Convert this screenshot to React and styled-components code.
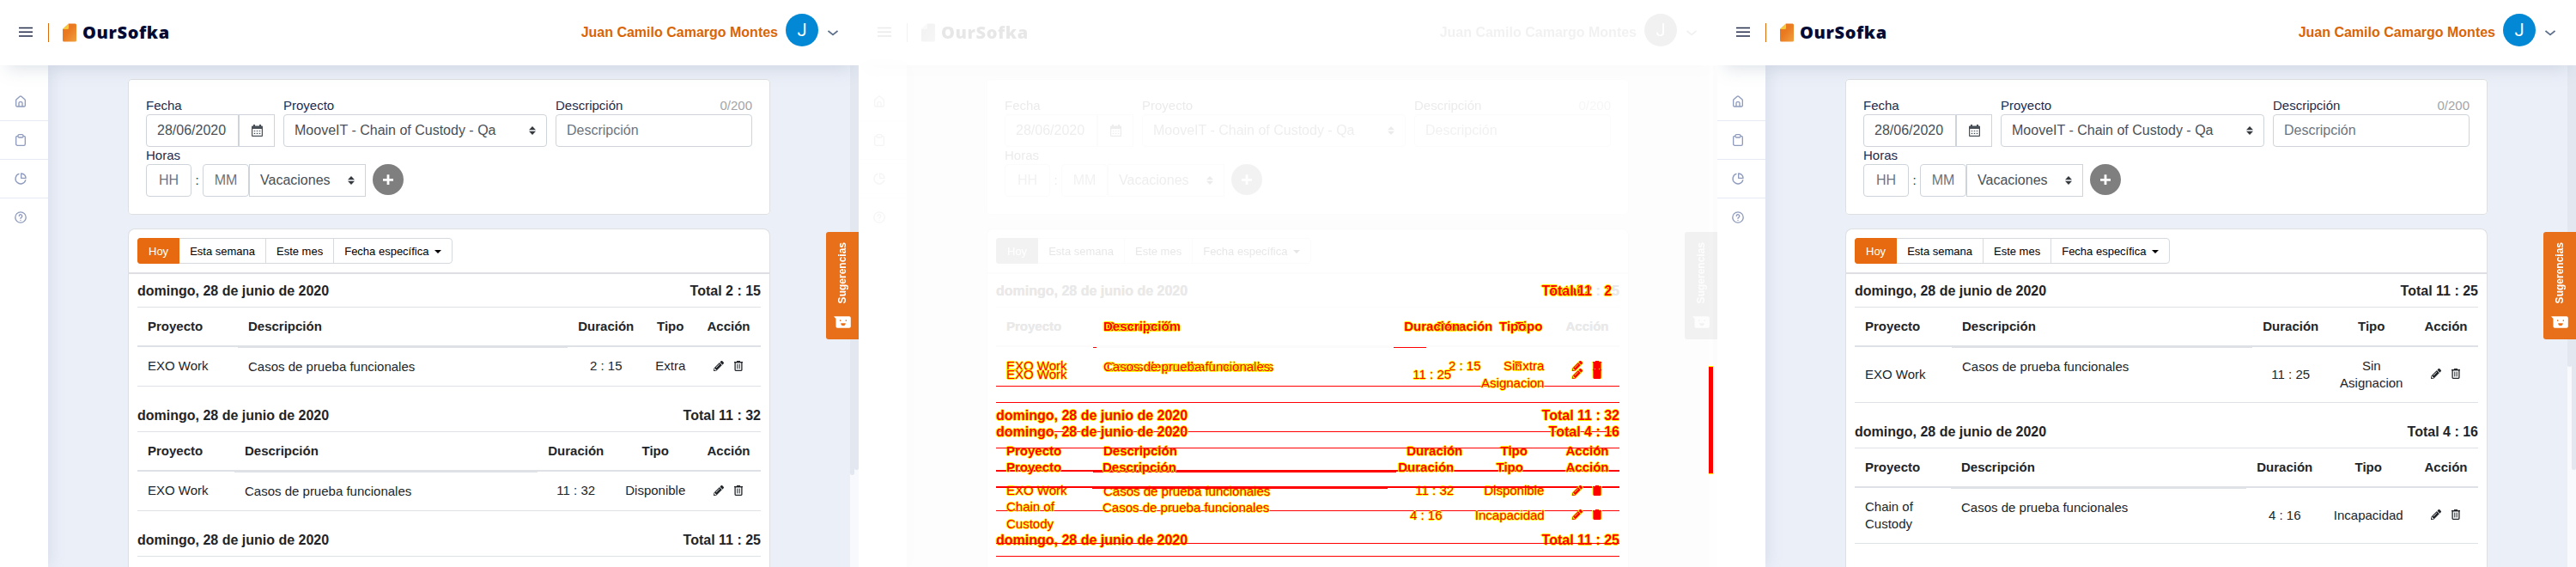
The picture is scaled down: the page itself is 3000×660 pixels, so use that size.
import React from "react";
import styled, { createGlobalStyle, css, ThemeProvider } from "styled-components";
import { FaPencilAlt } from "react-icons/fa";

const GlobalStyle = createGlobalStyle`
  *, *::before, *::after { box-sizing: border-box; }
  body { margin: 0; background: #fff; font-family: "Liberation Sans", Arial, Helvetica, sans-serif; }
  button, input { font-family: inherit; margin: 0; }
`;

const RED = "#ff0000";
const YELLOW = "#ffff00";

const normal = {
  fade: "none",
  page: "#ebeff8",
  cardLine: "#dddfe2",
  ink: "#212529",
  rule: "#dee2e6",
  rail: "#f7f9fd",
  thumb: "#e2e7f0",
};

const faded = {
  fade: "grayscale(1) opacity(0.1)",
  page: "#fdfdfd",
  cardLine: "#fbfbfb",
  ink: "#e9e9e9",
  rule: "#fbfbfb",
  rail: "#fefefe",
  thumb: "#fcfcfc",
};

const Board = styled.main`
  display: flex;
  width: 3000px;
  height: 660px;
  overflow: hidden;
`;

const Panel = styled.section`
  position: relative;
  display: flex;
  flex-direction: column;
  width: 1000px;
  height: 660px;
  overflow: hidden;
  background: #fff;
`;

const TopBar = styled.header`
  position: relative;
  z-index: 3;
  flex: none;
  display: flex;
  align-items: center;
  height: 76px;
  padding: 0 24px 0 22px;
  background: #fff;
  box-shadow: 0 12px 20px -8px rgba(125, 145, 165, 0.25);
  filter: ${(p) => p.theme.fade};
`;

const MenuIcon = styled.svg`
  display: block;
  width: 16px;
  height: 12px;
  margin-top: -2px;
`;

const Divider = styled.span`
  width: 1px;
  height: 22px;
  margin: 0 16px 0 18px;
  background: #d96b0b;
`;

const LogoMark = styled.svg`
  display: block;
  width: 16px;
  height: 22px;
  margin-top: -1px;
`;

const Brand = styled.span`
  flex: 1;
  padding: 0 0 0 7px;
  font: 800 20px/28px "Open Sans", "Noto Sans", sans-serif;
  letter-spacing: 0.6px;
  color: #030b35;
`;

const UserName = styled.span`
  margin-right: 9px;
  font-size: 16px;
  font-weight: 700;
  line-height: 20px;
  color: #d96506;
`;

const Avatar = styled.span`
  display: flex;
  align-items: center;
  justify-content: center;
  width: 38px;
  height: 38px;
  margin: -6px 11px 0 0;
  border-radius: 50%;
  background: #0288d4;
  color: #fff;
  font: 400 20px/38px Roboto, sans-serif;
`;

const Chevron = styled.svg`
  display: block;
  width: 12px;
  height: 7px;
  margin-top: 1px;
`;

const Body = styled.div`
  flex: 1;
  min-height: 0;
  display: flex;
`;

const SideNav = styled.nav`
  position: relative;
  z-index: 1;
  flex: none;
  width: 56px;
  padding-top: 20px;
  background: #fff;
  box-shadow: 2px 0 18px rgba(140, 160, 185, 0.22);
  filter: ${(p) => p.theme.fade};
`;

const NavItem = styled.a`
  display: flex;
  align-items: center;
  height: 45px;
  padding-left: 16px;
  border-bottom: 1px solid #e6eaf4;
  &:last-child { border-bottom-color: transparent; }
  svg { display: block; width: 16px; height: 16px; }
`;

const Content = styled.div`
  flex: 1;
  display: flex;
  flex-direction: column;
  gap: 16px;
  padding: 16px 93px 0;
  overflow: hidden;
  background: ${(p) => p.theme.page};
`;

const FormCard = styled.form`
  flex: none;
  height: 158px;
  padding: 20px;
  border: 1px solid #dddfe2;
  border-radius: 4px;
  background: #fff;
  filter: ${(p) => p.theme.fade};
`;

const FormBacking = styled.div`
  flex: none;
  border-radius: 4px;
  background: #fff;
`;

const FieldRow = styled.div`
  display: flex;
  gap: 10px;
`;

const Field = styled.div`
  width: ${(p) => p.$width}px;
`;

const Label = styled.div`
  display: flex;
  justify-content: space-between;
  height: 20px;
  font-size: 15px;
  line-height: 20px;
  color: #242c4c;
`;

const Counter = styled.span`
  color: #a3a4a8;
`;

const Controls = styled.div`
  display: flex;
`;

const Box = styled.div`
  display: flex;
  align-items: center;
  justify-content: ${(p) => (p.$center ? "center" : "space-between")};
  width: ${(p) => p.$width || "100%"};
  height: 38px;
  padding: 0 ${(p) => (p.$center ? 0 : 12)}px;
  border: 1px solid #ced4da;
  border-radius: ${(p) => p.$radius || "4px"};
  background: #fff;
  color: ${(p) => (p.$muted ? "#6c757d" : "#495057")};
  font-size: 16px;
  line-height: 24px;
  white-space: nowrap;
  & + & { margin-left: ${(p) => (p.$joined ? -1 : 0)}px; }
`;

const Arrows = styled.svg`
  width: 8px;
  height: 10px;
`;

const Colon = styled.span`
  width: 13px;
  text-align: center;
  font-size: 15px;
  line-height: 38px;
  color: #242c4c;
`;

const AddButton = styled.button`
  display: grid;
  place-items: center;
  width: 36px;
  height: 36px;
  margin-left: 8px;
  padding: 0;
  border: 0;
  border-radius: 50%;
  background: #7f7f7f;
`;

const LogCard = styled.section`
  flex: 1;
  min-height: 0;
  border: 1px solid ${(p) => p.theme.cardLine};
  border-bottom: 0;
  border-radius: 8px 8px 0 0;
  background: #fff;
  overflow: hidden;
`;

const Tabs = styled.div`
  display: flex;
  height: 52px;
  padding: 10px 10px 0;
  border-bottom: 2px solid #dddfe2;
  filter: ${(p) => p.theme.fade};
`;

const Tab = styled.button`
  display: flex;
  align-items: center;
  height: 30px;
  margin-left: -1px;
  padding: 2px 12px 0;
  border: 1px solid #d6d9dd;
  background: #fff;
  color: #000;
  font-size: 13px;
  line-height: 20px;
  white-space: nowrap;
  &:first-child { margin-left: 0; border-radius: 3px 0 0 3px; }
  &:last-child { border-radius: 0 4px 4px 0; }
  ${(p) =>
    p.$active &&
    css`
      position: relative;
      border-color: #e76a10;
      background: #e76a10;
      color: #fff;
    `}
`;

const Caret = styled.span`
  margin: -1px 0 0 7px;
  border: 4px solid transparent;
  border-top-color: currentColor;
  border-bottom: 0;
`;

const Layers = styled.div`
  display: grid;
  padding: 0 10px;
`;

const DayList = styled.div`
  grid-area: 1 / 1;
  display: flex;
  flex-direction: column;
  gap: 14px;
`;

const changedText = css`
  color: ${RED};
  text-shadow: 1px 0 ${YELLOW}, -1px 0 ${YELLOW}, 0 1px ${YELLOW}, 0 -1px ${YELLOW};
`;

const Ink = styled.span`
  color: ${(p) => p.theme.ink};
  ${(p) => p.$changed && changedText}
`;

const DayHeading = styled.h2`
  display: flex;
  justify-content: space-between;
  height: 38px;
  margin: 0;
  padding-top: 8px;
  font-size: 16px;
  font-weight: 700;
  line-height: 24px;
`;

const Grid = styled.div`
  display: grid;
  grid-template-columns: ${(p) => p.$cols[0]}px ${(p) => p.$cols[1]}px 89.5px 1fr 75px;
  border-top: 1px solid ${(p) => (p.$top ? RED : p.theme.rule)};
  border-bottom: 1px solid ${(p) => (p.$bottom ? RED : p.theme.rule)};
  font-size: 15px;
  line-height: 20px;
`;

const EmptyTable = styled.div`
  border-top: 1px solid ${(p) => (p.$changed ? RED : p.theme.rule)};
`;

const Head = styled.div`
  height: 46px;
  padding: 12px;
  border-bottom: 2px solid ${(p) => (p.$changed ? RED : p.theme.rule)};
  font-weight: 700;
  text-align: ${(p) => (p.$center ? "center" : "left")};
`;

const Cell = styled.div`
  display: flex;
  align-items: center;
  justify-content: ${(p) => (p.$center ? "center" : "flex-start")};
  padding: 11.9px 12px 12.1px;
  text-align: ${(p) => (p.$center ? "center" : "left")};
`;

const Detail = styled.div`
  padding: 13px 12px 12px;
  background: ${(p) => p.$line} top / 100% 1px no-repeat;
`;

const Lines = styled.span`
  white-space: pre-line;
`;

const Actions = styled.div`
  display: flex;
  align-items: center;
  justify-content: center;
  gap: 12px;
  padding: 0 2px 2px 0;
  color: ${(p) => (p.$changed ? RED : p.theme.ink)};
  filter: ${(p) =>
    p.$changed
      ? `drop-shadow(1px 0 0 ${YELLOW}) drop-shadow(-1px 0 0 ${YELLOW})`
      : "none"};
  svg { display: block; }
`;

const Rails = styled.aside`
  flex: none;
  display: flex;
  width: 10px;
  background: ${(p) => p.theme.rail};
`;

const Thumb = styled.div`
  width: 5px;
  height: ${(p) => p.$height}px;
  border-radius: 0 0 3px 3px;
  background: ${(p) => p.theme.thumb};
`;

const MovedThumb = styled.div`
  width: 5px;
  height: 126px;
  margin-top: ${(p) => p.$offset}px;
  border: solid ${YELLOW};
  border-width: 1px 0;
  background: ${RED};
`;

const SuggestTab = styled.button`
  position: absolute;
  z-index: 4;
  right: 0;
  top: 270px;
  display: flex;
  flex-direction: column;
  align-items: center;
  justify-content: space-between;
  width: 38px;
  height: 125px;
  padding: 12px 0 13px;
  border: 0;
  border-radius: 3px 0 0 3px;
  background: #e8701a;
  color: #fff;
  font-size: 12px;
  font-weight: 700;
  line-height: 14px;
  filter: ${(p) => p.theme.fade};
`;

const SideText = styled.span`
  writing-mode: vertical-rl;
  transform: rotate(180deg);
`;

const NAV_COLOR = "#8f9bbd";

const navIcons = [
  <svg key="home" viewBox="0 0 24 24" fill={NAV_COLOR}>
    <path d="M20,8h0L14,2.74a3,3,0,0,0-4,0L4,8a3,3,0,0,0-1,2.26V19a3,3,0,0,0,3,3H18a3,3,0,0,0,3-3V10.25A3,3,0,0,0,20,8ZM14,20H10V15a1,1,0,0,1,1-1h2a1,1,0,0,1,1,1Zm5-1a1,1,0,0,1-1,1H16V15a3,3,0,0,0-3-3H11a3,3,0,0,0-3,3v5H6a1,1,0,0,1-1-1V10.25a1,1,0,0,1,.34-.75l6-5.25a1,1,0,0,1,1.32,0l6,5.25a1,1,0,0,1,.34.75Z" />
  </svg>,
  <svg key="clip" viewBox="0 0 24 24" fill="none" stroke={NAV_COLOR} strokeWidth="2">
    <path d="M7.500 5H6.500A2.500 2.500 0 0 0 4 7.500V19a2.500 2.500 0 0 0 2.500 2.500h11A2.500 2.500 0 0 0 20 19V7.500A2.500 2.500 0 0 0 17.500 5h-1" />
    <rect x="7.500" y="2.500" width="9" height="5" rx="2" />
  </svg>,
  <svg key="pie" viewBox="0 0 24 24" fill="none" stroke={NAV_COLOR} strokeWidth="2" strokeLinecap="round" strokeLinejoin="round">
    <path d="M9 3.500A9 9 0 1 0 20.700 14.500" />
    <path d="M13 3v8h8.200A9 9 0 0 0 13 3Z" />
  </svg>,
  <svg key="help" viewBox="0 0 24 24" fill="none" stroke={NAV_COLOR} strokeWidth="2" strokeLinecap="round">
    <circle cx="12" cy="12" r="9.300" />
    <path d="M9.400 9.600a2.650 2.650 0 1 1 3.900 2.500c-.9.500-1.300.9-1.300 1.800" />
    <path d="M12 17v.1" />
  </svg>,
];

const SelectArrows = () => (
  <Arrows viewBox="0 0 8 10" fill="#343a40">
    <path d="M4 0 8 4.200H0ZM4 10 0 5.800h8Z" />
  </Arrows>
);

const CalendarIcon = () => (
  <svg width="13" height="14" viewBox="0 0 13 14">
    <path fill="#495057" fillRule="evenodd" d="M2 0h2v1.500h5V0h2v1.500h1a1 1 0 0 1 1 1V13a1 1 0 0 1-1 1H1a1 1 0 0 1-1-1V2.500a1 1 0 0 1 1-1h1ZM1.200 5v7.800h10.600V5Z" />
    <path stroke="#495057" strokeWidth="1.200" strokeDasharray="1.500 1.500" d="M2.750 7.500h8M2.750 10.300h8" />
  </svg>
);

const TrashIcon = ({ solid }) => (
  <svg width="10" height="12" viewBox="0 0 10 12" fill="none" stroke="currentColor">
    <path strokeWidth="1.200" d="M0 1.600h10M3 .6h4" />
    <rect x="1.100" y="1.600" width="7.800" height="9.700" rx=".8" strokeWidth="1.300" fill={solid ? "currentColor" : "none"} />
    <path strokeWidth="1" d="M3.800 3.600v5.800M6.200 3.600v5.800" />
  </svg>
);

function Header() {
  return (
    <TopBar>
      <MenuIcon viewBox="0 0 16 12" stroke="#242c4c" strokeWidth="1.500">
        <path d="M0 1.500h16M0 6.200h16M0 10.900h16" />
      </MenuIcon>
      <Divider />
      <LogoMark viewBox="0 0 16 22">
        <defs>
          <linearGradient id="logo" x1="0" y1="0" x2="1" y2="1">
            <stop offset="0" stopColor="#e9721b" />
            <stop offset=".45" stopColor="#ea7b22" />
            <stop offset="1" stopColor="#f0a03c" />
          </linearGradient>
        </defs>
        <path fill="url(#logo)" d="M7 .5h7.500A1.500 1.500 0 0 1 16 2v18a1.500 1.500 0 0 1-1.500 1.500h-13A1.500 1.500 0 0 1 0 20V7Z" />
        <path fill="#f3c93e" d="M7 .5V5.500A1.500 1.500 0 0 1 5.500 7H0Z" />
      </LogoMark>
      <Brand>OurSofka</Brand>
      <UserName>Juan Camilo Camargo Montes</UserName>
      <Avatar>J</Avatar>
      <Chevron viewBox="0 0 12 7" fill="none" stroke="#5d6f8c" strokeWidth="1.700">
        <path d="M.5 1 6 5.500 11.500 1" />
      </Chevron>
    </TopBar>
  );
}

function EntryForm() {
  return (
    <FormBacking>
      <FormCard>
        <FieldRow>
          <Field $width={150}>
            <Label>Fecha</Label>
            <Controls>
              <Box $width="109px" $radius="4px 0 0 4px">28/06/2020</Box>
              <Box $width="42px" $radius="0" $center $joined><CalendarIcon /></Box>
            </Controls>
          </Field>
          <Field $width={307}>
            <Label>Proyecto</Label>
            <Box>MooveIT - Chain of Custody - Qa<SelectArrows /></Box>
          </Field>
          <Field $width={229}>
            <Label>Descripción<Counter>0/200</Counter></Label>
            <Box $muted>Descripción</Box>
          </Field>
        </FieldRow>
        <Label>Horas</Label>
        <Controls>
          <Box $width="53px" $center $muted>HH</Box>
          <Colon>:</Colon>
          <Box $width="54px" $center $muted>MM</Box>
          <Box $width="136px" $radius="0">Vacaciones<SelectArrows /></Box>
          <AddButton type="button">
            <svg width="12" height="12" viewBox="0 0 12 12" stroke="#fff" strokeWidth="2.800">
              <path d="M6 .3v12M0 6.300h12" />
            </svg>
          </AddButton>
        </Controls>
      </FormCard>
    </FormBacking>
  );
}

function Day({ day, changed, first }) {
  const shared = changed && !first;
  const [total, minutes] = day.total;
  const line = !changed
    ? "linear-gradient(#dee2e6, #dee2e6)"
    : first && day.edge
      ? `linear-gradient(to right, ${RED} 4px, #fbfbfb 4px)`
      : `linear-gradient(${RED}, ${RED})`;
  return (
    <section>
      <DayHeading>
        <Ink $changed={shared}>domingo, 28 de junio de 2020</Ink>
        {changed && first ? (
          <span>
            <Ink $changed>Total {total}</Ink>
            <Ink> : </Ink>
            <Ink $changed>{minutes[0]}</Ink>
            <Ink>{minutes[1]}</Ink>
          </span>
        ) : (
          <Ink $changed={changed}>Total {total} : {minutes}</Ink>
        )}
      </DayHeading>
      {day.cols ? (
        <Grid $cols={day.cols} $top={shared} $bottom={changed}>
          <Head $changed={shared}><Ink $changed={shared}>Proyecto</Ink></Head>
          <Head $changed={shared}><Ink $changed={changed}>Descripción</Ink></Head>
          <Head $changed={shared} $center><Ink $changed={changed}>Duración</Ink></Head>
          <Head $changed={shared} $center><Ink $changed={changed}>Tipo</Ink></Head>
          <Head $changed={shared} $center><Ink $changed={shared}>Acción</Ink></Head>
          <Cell><Ink $changed={changed}><Lines>{day.project}</Lines></Ink></Cell>
          <Detail $line={line}><Ink $changed={changed}>Casos de prueba funcionales</Ink></Detail>
          <Cell $center><Ink $changed={changed}>{day.time}</Ink></Cell>
          <Cell $center><Ink $changed={changed}><Lines>{day.type}</Lines></Ink></Cell>
          <Actions $changed={changed}>
            <FaPencilAlt size={12} />
            <TrashIcon solid={changed} />
          </Actions>
        </Grid>
      ) : (
        <EmptyTable $changed={shared} />
      )}
    </section>
  );
}

const before = [
  { total: ["2", "15"], cols: [117, 384], project: "EXO Work", time: "2 : 15", type: "Extra" },
  { total: ["11", "32"], cols: [113, 353], project: "EXO Work", time: "11 : 32", type: "Disponible" },
  { total: ["11", "25"] },
];

const after = [
  { total: ["11", "25"], cols: [113, 350], project: "EXO Work", time: "11 : 25", type: "Sin\nAsignacion", edge: true },
  { total: ["4", "16"], cols: [112, 344], project: "Chain of\nCustody", time: "4 : 16", type: "Incapacidad" },
];

function Screen({ layers, scroll, changed }) {
  return (
    <ThemeProvider theme={changed ? faded : normal}>
      <Panel>
        <Header />
        <Body>
          <SideNav>
            {navIcons.map((icon) => <NavItem key={icon.key}>{icon}</NavItem>)}
          </SideNav>
          <Content>
            <EntryForm />
            <LogCard>
              <Tabs>
                <Tab $active>Hoy</Tab>
                <Tab>Esta semana</Tab>
                <Tab>Este mes</Tab>
                <Tab>Fecha específica<Caret /></Tab>
              </Tabs>
              <Layers>
                {layers.map((days, i) => (
                  <DayList key={i}>
                    {days.map((day, j) => <Day key={j} day={day} changed={changed} first={j === 0} />)}
                  </DayList>
                ))}
              </Layers>
            </LogCard>
          </Content>
          <Rails>
            {changed ? <MovedThumb $offset={350} /> : <Thumb $height={scroll} />}
            <Thumb $height={471} />
          </Rails>
        </Body>
        <SuggestTab>
          <SideText>Sugerencias</SideText>
          <svg width="20" height="14" viewBox="0 0 20 14">
            <path fill="#fff" d="M0 .3h18a1.800 1.800 0 0 1 1.800 1.800v9.800a1.800 1.800 0 0 1-1.800 1.800H4.300a1.800 1.800 0 0 1-1.800-1.800V3Z" />
            <path fill="none" stroke="#e8701a" strokeWidth="1.200" d="M7.700 4.300v1.600M14.300 4.300v1.600" />
            <path fill="#e8701a" d="M8.200 8.300h5.600a2.800 2.800 0 0 1-5.600 0Z" />
          </svg>
        </SuggestTab>
      </Panel>
    </ThemeProvider>
  );
}

export default function App() {
  return (
    <>
      <GlobalStyle />
      <Board>
        <Screen layers={[before]} scroll={477} />
        <Screen layers={[before, after]} changed />
        <Screen layers={[after]} scroll={351} />
      </Board>
    </>
  );
}
